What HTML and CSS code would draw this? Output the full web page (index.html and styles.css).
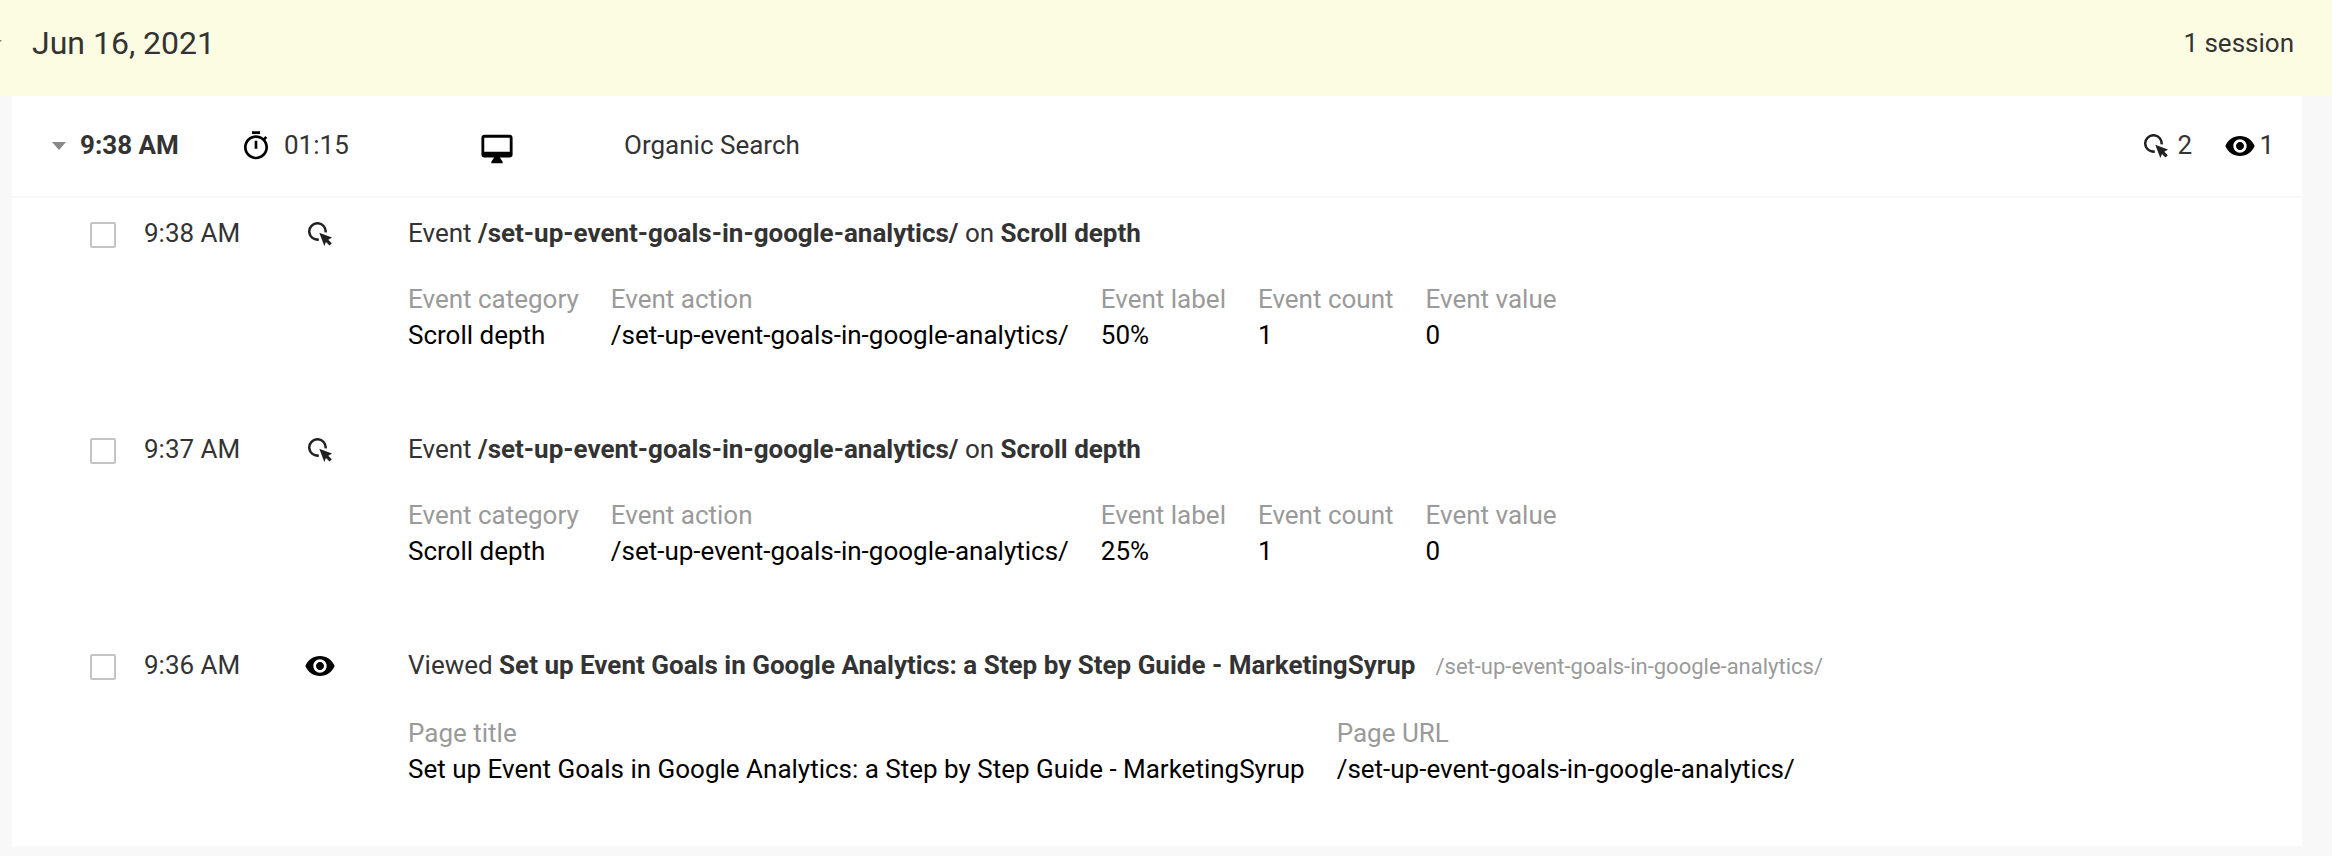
FILE: index.html
```html
<!DOCTYPE html>
<html lang="en">

<head>
    <meta charset="UTF-8">
    <meta name="viewport" content="width=device-width, initial-scale=1.0">
    <title>User Explorer</title>
    <link rel="stylesheet" href="styles.css">
</head>

<body>
    <!-- shared icons -->
    <svg class="sprite">
        <symbol id="timer" viewBox="0 0 24 24">
            <path d="M15 1H9v2h6V1zm-4 13h2V8h-2v6zm8.03-6.61l1.42-1.42c-.43-.51-.9-.99-1.41-1.41l-1.42 1.42C16.07 4.74 14.12 4 12 4c-4.97 0-9 4.03-9 9s4.02 9 9 9 9-4.03 9-9c0-2.12-.74-4.07-1.97-5.61zM12 20c-3.87 0-7-3.13-7-7s3.13-7 7-7 7 3.13 7 7-3.13 7-7 7z" />
        </symbol>
        <symbol id="desktop" viewBox="0 0 24 24">
            <path d="M21 2H3c-1.1 0-2 .9-2 2v12c0 1.1.9 2 2 2h7l-2 3v1h8v-1l-2-3h7c1.1 0 2-.9 2-2V4c0-1.1-.9-2-2-2zm0 12H3V4h18v10z" />
        </symbol>
        <symbol id="eye" viewBox="0 0 24 24">
            <path d="M12 4.500C7 4.500 2.730 7.610 1 12c1.730 4.390 6 7.500 11 7.500s9.270-3.110 11-7.500c-1.730-4.390-6-7.500-11-7.500zM12 17c-2.760 0-5-2.240-5-5s2.240-5 5-5 5 2.240 5 5-2.240 5-5 5zm0-8c-1.660 0-3 1.340-3 3s1.340 3 3 3 3-1.340 3-3-1.340-3-3-3z" />
        </symbol>
        <symbol id="click" viewBox="0 0 24 24">
            <path d="M10.800 17.500A8.200 8.200 0 1 1 17.600 10.300" fill="none" stroke="#212121" stroke-width="2.500" />
            <path d="M11.300 10.700L24 15.600L20.300 17.700L23.800 21.200L21.500 23.500L18 20L16.300 24Z" fill="#212121" />
        </symbol>
    </svg>

    <div class="day">
        <span class="caret"></span>
        <span class="date">Jun 16, 2021</span>
        <span class="total">1 session</span>
    </div>

    <div class="card">
        <div class="session">
            <span class="caret"></span>
            <span class="start">9:38 AM</span>
            <svg class="icon"><use href="#timer" /></svg>
            <span class="duration">01:15</span>
            <svg class="device"><use href="#desktop" /></svg>
            <span class="channel">Organic Search</span>
            <div class="counts">
                <svg class="click"><use href="#click" /></svg>
                <span class="clicks">2</span>
                <svg class="icon"><use href="#eye" /></svg>
                <span class="views">1</span>
            </div>
        </div>

        <div class="hit">
            <span class="checkbox"></span>
            <span class="time">9:38 AM</span>
            <div class="type"><svg class="click"><use href="#click" /></svg></div>
            <div class="details">
                <div class="title">Event <b>/set-up-event-goals-in-google-analytics/</b> on <b>Scroll depth</b></div>
                <div class="fields">
                    <div><span class="label">Event category</span>Scroll depth</div>
                    <div><span class="label">Event action</span>/set-up-event-goals-in-google-analytics/</div>
                    <div><span class="label">Event label</span>50%</div>
                    <div><span class="label">Event count</span>1</div>
                    <div><span class="label">Event value</span>0</div>
                </div>
            </div>
        </div>

        <div class="hit">
            <span class="checkbox"></span>
            <span class="time">9:37 AM</span>
            <div class="type"><svg class="click"><use href="#click" /></svg></div>
            <div class="details">
                <div class="title">Event <b>/set-up-event-goals-in-google-analytics/</b> on <b>Scroll depth</b></div>
                <div class="fields">
                    <div><span class="label">Event category</span>Scroll depth</div>
                    <div><span class="label">Event action</span>/set-up-event-goals-in-google-analytics/</div>
                    <div><span class="label">Event label</span>25%</div>
                    <div><span class="label">Event count</span>1</div>
                    <div><span class="label">Event value</span>0</div>
                </div>
            </div>
        </div>

        <div class="hit">
            <span class="checkbox"></span>
            <span class="time">9:36 AM</span>
            <div class="type"><svg class="icon"><use href="#eye" /></svg></div>
            <div class="details">
                <div class="title">Viewed <b>Set up Event Goals in Google Analytics: a Step by Step Guide - MarketingSyrup</b><span class="url">/set-up-event-goals-in-google-analytics/</span></div>
                <div class="fields">
                    <div><span class="label">Page title</span>Set up Event Goals in Google Analytics: a Step by Step Guide - MarketingSyrup</div>
                    <div><span class="label">Page URL</span>/set-up-event-goals-in-google-analytics/</div>
                </div>
            </div>
        </div>
    </div>
</body>

</html>
```
FILE: styles.css
```css
* {
    margin: 0;
    padding: 0;
    box-sizing: border-box;
}

body {
    height: 856px;
    background-color: #f8f8f8;
    font-family: Roboto, sans-serif;
    font-size: 26px;
    line-height: 36px;
    color: #333;
    overflow: hidden;
    white-space: nowrap;
}

.sprite {
    display: none;
}

svg {
    display: block;
    flex: none;
}

b {
    font-weight: 700;
}

.day {
    display: flex;
    align-items: center;
    height: 96px;
    padding: 0 38px 10px 0;
    background-color: #fcfce3;
}

.caret {
    width: 14px;
    height: 8px;
    margin-top: 2px;
    background-color: #888;
    clip-path: polygon(0 0, 100% 0, 50% 100%);
}

.day .caret {
    margin-left: -12px;
}

.date {
    margin-left: 30px;
    font-size: 32px;
}

.total {
    margin-left: auto;
}

.card {
    width: 2290px;
    height: 750px;
    margin-left: 12px;
    background-color: #fff;
}

.session {
    display: flex;
    align-items: center;
    height: 102px;
    padding: 0 28px 2px 40px;
    border-bottom: 2px solid #f8f8f8;
}

.start {
    width: 160px;
    margin-left: 14px;
    font-weight: 700;
}

.icon {
    width: 32px;
    height: 32px;
}

.session .icon {
    margin-top: 2px;
}

.duration {
    width: 196px;
    margin-left: 12px;
}

.device {
    width: 34px;
    height: 34px;
    margin-top: 7px;
}

.channel {
    margin-left: 110px;
}

.counts {
    display: flex;
    align-items: center;
    margin-left: auto;
}

.click {
    width: 24px;
    height: 24px;
}

.session .click {
    margin-top: 2px;
}

.clicks {
    width: 47px;
    margin-left: 9px;
}

.views {
    margin-left: 3px;
}

.hit {
    display: flex;
    height: 216px;
    padding: 17px 0 0 78px;
}

.checkbox {
    width: 26px;
    height: 26px;
    margin-top: 7px;
    border: 2px solid #c4c4c4;
    border-radius: 2px;
}

.time {
    width: 160px;
    margin-left: 28px;
}

.type {
    display: flex;
    align-items: center;
    justify-content: center;
    width: 32px;
    height: 38px;
}

.details {
    margin-left: 72px;
}

.fields {
    display: flex;
    gap: 32px;
    margin-top: 30px;
    color: #000;
}

.label {
    display: block;
    color: #9a9a9a;
}

.url {
    margin-left: 20px;
    font-size: 22px;
    color: #9a9a9a;
}
```
